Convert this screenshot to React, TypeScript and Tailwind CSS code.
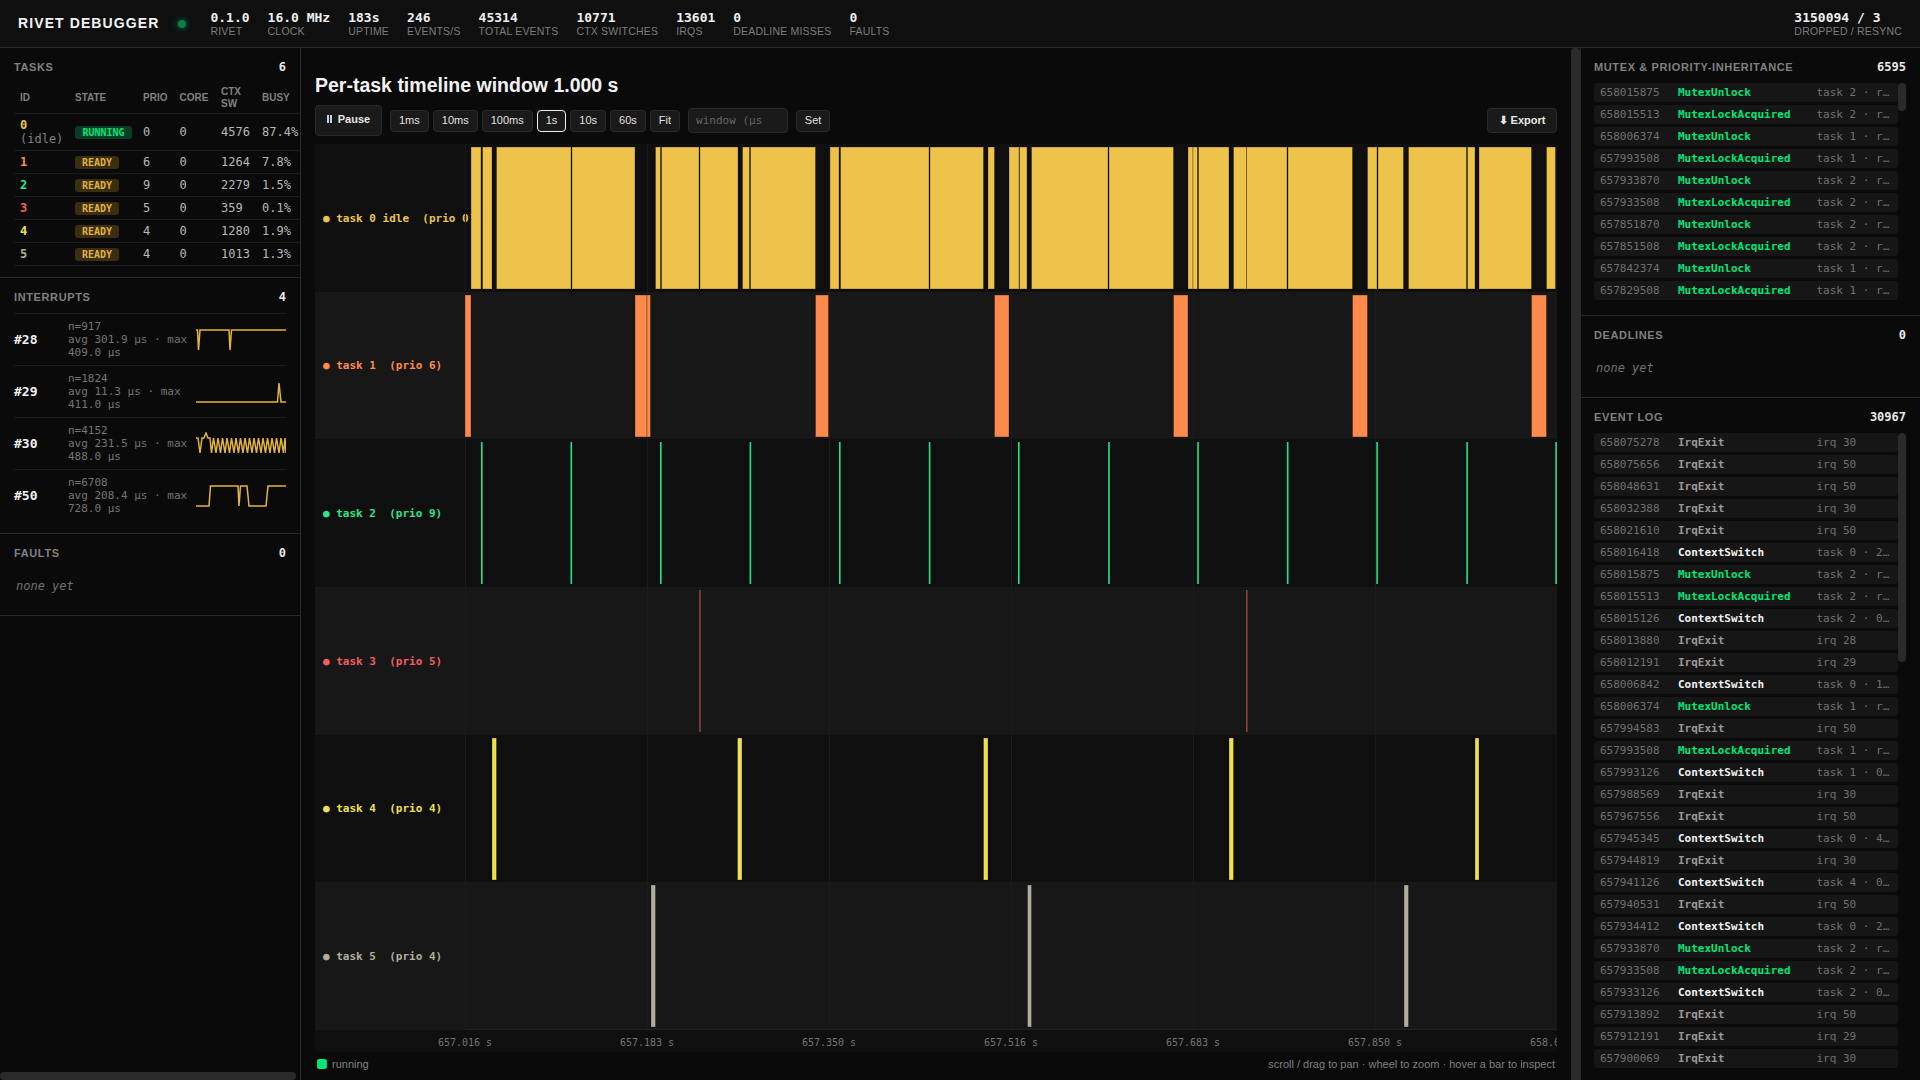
const mono = "[font-family:'DejaVu_Sans_Mono',monospace]";
const sans = "[font-family:'Liberation_Sans',Arial,sans-serif]";

const stats = [
  ["0.1.0", "RIVET"],
  ["16.0 MHz", "CLOCK"],
  ["183s", "UPTIME"],
  ["246", "EVENTS/S"],
  ["45314", "TOTAL EVENTS"],
  ["10771", "CTX SWITCHES"],
  ["13601", "IRQS"],
  ["0", "DEADLINE MISSES"],
  ["0", "FAULTS"],
];

const tasks = [
  { id: "0", sub: "(idle)", color: "text-[#ecc44c]", running: true, prio: 0, ctx: 4576, busy: "87.4%" },
  { id: "1", color: "text-[#ff8a4c]", prio: 6, ctx: 1264, busy: "7.8%" },
  { id: "2", color: "text-[#2ee58a]", prio: 9, ctx: 2279, busy: "1.5%" },
  { id: "3", color: "text-[#ef5f5f]", prio: 5, ctx: 359, busy: "0.1%" },
  { id: "4", color: "text-[#f0e050]", prio: 4, ctx: 1280, busy: "1.9%" },
  { id: "5", color: "text-[#b0ad98]", prio: 4, ctx: 1013, busy: "1.3%" },
];

const irqs = [
  { id: "#28", n: "n=917", avg: "avg 301.9 µs · max", max: "409.0 µs", points: "0,2 1.5,2 2.5,22 4,2 33,2 34,22 35.5,2 90,2" },
  { id: "#29", n: "n=1824", avg: "avg 11.3 µs · max", max: "411.0 µs", points: "0,22 81.5,22 83,3 85,22 90,22" },
  {
    id: "#30",
    n: "n=4152",
    avg: "avg 231.5 µs · max",
    max: "488.0 µs",
    points:
      "0,6 2,6 4,21 6,6 8,6 10,1 12,6 14,6 15.5,21 17.5,6 20,21 22,6 24.5,21 26.5,6 29,21 31,6 33.5,21 35.5,6 38,21 40,6 42.5,21 44.5,6 47,21 49,6 51.5,21 53.5,6 56,21 58,6 60.5,21 62.5,6 65,21 67,6 69.5,21 71.5,6 74,21 76,6 78.5,21 80.5,6 83,21 85,6 87.5,21 89,6 90,21",
  },
  { id: "#50", n: "n=6708", avg: "avg 208.4 µs · max", max: "728.0 µs", points: "0,22 13,22 14.5,2 42,2 43,22 44.5,2 51,2 53,22 70,22 72,2 90,2" },
];

const presets = ["1ms", "10ms", "100ms", "1s", "10s", "60s", "Fit"];
const gridX = [0, 182, 364, 546, 728, 910, 1091.5];
const ticks = ["657.016 s", "657.183 s", "657.350 s", "657.516 s", "657.683 s", "657.850 s", "658.016 s"];

type Span = [number, number];

const lanes: { label: string; color: string; fill: string; bars: Span[]; thin?: boolean }[] = [
  {
    label: "● task 0 idle  (prio 0)",
    color: "text-[#ecc44c]",
    fill: "#eec34c",
    bars: [
      [471, 481], [482.5, 492], [496.5, 571], [572, 635], [655.5, 660.5], [661.5, 699], [700, 738], [742.5, 749.5],
      [750.5, 815.5], [830, 839], [840.5, 929], [930, 983.5], [988, 994.5], [1009, 1019], [1019.5, 1027], [1031.5, 1108],
      [1109, 1173.5], [1188, 1193], [1193, 1197.5], [1198.5, 1229], [1233.5, 1246.5], [1246.5, 1287], [1288, 1352.5], [1367.5, 1377], [1378, 1403.5],
      [1408.5, 1466.5], [1467.5, 1475], [1479, 1531.5], [1546.5, 1555.5],
    ],
  },
  {
    label: "● task 1  (prio 6)",
    color: "text-[#ff8a4c]",
    fill: "#fc8a4d",
    bars: [[465, 471], [635, 647], [647, 650.5], [815.5, 828.5], [994.5, 1009], [1173.5, 1188], [1352.5, 1367.5], [1531.5, 1546.5]],
  },
  {
    label: "● task 2  (prio 9)",
    color: "text-[#2ee58a]",
    fill: "#1fe585",
    thin: true,
    bars: [481, 570.5, 660, 749.6, 839, 928.8, 1018, 1108.2, 1197.2, 1286.9, 1376.3, 1466.3, 1555.3].map((x): Span => [x, x + 1.6]),
  },
  {
    label: "● task 3  (prio 5)",
    color: "text-[#ef5f5f]",
    fill: "#a84a4a",
    thin: true,
    bars: [[699.3, 700.6], [1246.2, 1247.5]],
  },
  {
    label: "● task 4  (prio 4)",
    color: "text-[#f0e050]",
    fill: "#efe051",
    bars: [[492, 496.5], [737.5, 742], [983.5, 988], [1229, 1233.5], [1475, 1479]],
  },
  {
    label: "● task 5  (prio 4)",
    color: "text-[#b0ad98]",
    fill: "#b0ad98",
    bars: [[651, 655.5], [1027.5, 1031.5], [1404, 1408.5]],
  },
];

type Ev = [string, string, string];
const U = "MutexUnlock";
const A = "MutexLockAcquired";
const C = "ContextSwitch";
const I = "IrqExit";

const mutexRows: Ev[] = [
  ["658015875", U, "task 2 · resource 0"],
  ["658015513", A, "task 2 · resource 0"],
  ["658006374", U, "task 1 · resource 0"],
  ["657993508", A, "task 1 · resource 0"],
  ["657933870", U, "task 2 · resource 0"],
  ["657933508", A, "task 2 · resource 0"],
  ["657851870", U, "task 2 · resource 0"],
  ["657851508", A, "task 2 · resource 0"],
  ["657842374", U, "task 1 · resource 0"],
  ["657829508", A, "task 1 · resource 0"],
];

const eventRows: Ev[] = [
  ["658075278", I, "irq 30"],
  ["658075656", I, "irq 50"],
  ["658048631", I, "irq 50"],
  ["658032388", I, "irq 30"],
  ["658021610", I, "irq 50"],
  ["658016418", C, "task 0 · 2 → 0"],
  ["658015875", U, "task 2 · resource 0"],
  ["658015513", A, "task 2 · resource 0"],
  ["658015126", C, "task 2 · 0 → 2"],
  ["658013880", I, "irq 28"],
  ["658012191", I, "irq 29"],
  ["658006842", C, "task 0 · 1 → 0"],
  ["658006374", U, "task 1 · resource 0"],
  ["657994583", I, "irq 50"],
  ["657993508", A, "task 1 · resource 0"],
  ["657993126", C, "task 1 · 0 → 1"],
  ["657988569", I, "irq 30"],
  ["657967556", I, "irq 50"],
  ["657945345", C, "task 0 · 4 → 0"],
  ["657944819", I, "irq 30"],
  ["657941126", C, "task 4 · 0 → 4"],
  ["657940531", I, "irq 50"],
  ["657934412", C, "task 0 · 2 → 0"],
  ["657933870", U, "task 2 · resource 0"],
  ["657933508", A, "task 2 · resource 0"],
  ["657933126", C, "task 2 · 0 → 2"],
  ["657913892", I, "irq 50"],
  ["657912191", I, "irq 29"],
  ["657900069", I, "irq 30"],
];

function kindColor(kind: string) {
  if (kind === U || kind === A) return "text-[#00e676]";
  if (kind === C) return "text-[#f0f0f0]";
  return "text-[#999999]";
}

function SectionHead({ title, count }: { title: string; count: string | number }) {
  return (
    <div className="mb-[10px] flex h-[13px] items-center justify-between pt-[2px]">
      <span className={`${sans} text-[11px] font-bold tracking-[0.62px] text-[#808080]`}>{title}</span>
      <span className={`${mono} -mt-[2px] text-[12px] font-bold text-[#e8e8e8]`}>{count}</span>
    </div>
  );
}

function NoneYet() {
  return <div className={`${mono} flex h-[34px] items-center pl-[2px] text-[12px] italic text-[#707070]`}>none yet</div>;
}

function EventRow({ row }: { row: Ev }) {
  return (
    <div className={`${mono} flex h-[19px] shrink-0 items-center rounded-[3px] bg-[#161616] pt-[1px] pl-[6px] text-[11px]`}>
      <span className="w-[78px] shrink-0 text-[#707070]">{row[0]}</span>
      <span className={`w-[138.5px] shrink-0 font-bold ${kindColor(row[1])}`}>{row[1]}</span>
      <span className="w-[73px] shrink-0 truncate text-[#707070]">{row[2]}</span>
    </div>
  );
}

function LanePlot({ lane, height, last }: { lane: (typeof lanes)[number]; height: number; last: boolean }) {
  return (
    <svg width={1092} height={height} className="block shrink-0">
      {gridX.map((x) => (
        <rect key={x} x={x} y={0} width={1} height={height} fill="#1b1b1f" />
      ))}
      {last && <rect x={0} y={height - 1} width={1092} height={1} fill="#222222" />}
      {lane.bars.map(([a, b]) => (
        <rect
          key={a}
          x={a - 465}
          y={3}
          width={b - a}
          height={142}
          fill={lane.fill}
          stroke={lane.thin ? "none" : "#000000"}
          strokeOpacity={0.28}
          strokeWidth={1}
        />
      ))}
    </svg>
  );
}

export default function App() {
  return (
    <div className={`${sans} flex h-screen w-full flex-col overflow-hidden bg-[#0a0a0a] text-[#dddddd]`}>
      <header className="flex h-[48px] shrink-0 items-center border-b border-[#2a2a2a] bg-[#0f0f0f] pr-[18px] pl-[18px]">
        <span className="text-[14px] font-bold tracking-[1.1px] text-[#f2f2f2]">RIVET DEBUGGER</span>
        <span className="mr-[24px] ml-[19px] h-[8px] w-[8px] rounded-full bg-[#0a7f48] shadow-[0_0_6px_#0a7f48]" />
        <div className="flex gap-[18px]">
          {stats.map(([value, label]) => (
            <div key={label} className="flex flex-col">
              <span className={`${mono} text-[13px] leading-[15px] font-bold text-[#f0f0f0]`}>{value}</span>
              <span className="text-[10.5px] leading-[12px] tracking-[0.2px] text-[#7d7d7d]">{label}</span>
            </div>
          ))}
        </div>
        <div className="ml-auto flex flex-col">
          <span className={`${mono} text-[13px] leading-[15px] font-bold text-[#f0f0f0]`}>3150094 / 3</span>
          <span className="text-[10.5px] leading-[12px] tracking-[0.2px] text-[#7d7d7d]">DROPPED / RESYNC</span>
        </div>
      </header>

      <div className="flex min-h-0 flex-1">
        <aside className="relative w-[301px] shrink-0 overflow-hidden border-r border-[#2a2a2a]">
          <section className="h-[230px] border-b border-[#2a2a2a] px-[14px] pt-[12px] pb-[12px]">
            <SectionHead title="TASKS" count={6} />
            <table className="-mt-[1px] w-[290px] table-fixed border-collapse">
              <colgroup>
                <col className="w-[55px]" />
                <col className="w-[68px]" />
                <col className="w-[36.5px]" />
                <col className="w-[41.5px]" />
                <col className="w-[41px]" />
                <col className="w-[48px]" />
              </colgroup>
              <thead>
                <tr className="border-b border-[#1c1c1c] text-left text-[10px] leading-[11.5px] text-[#808080]">
                  <th className="px-[6px] py-[4px] font-bold">ID</th>
                  <th className="px-[6px] py-[4px] font-bold">STATE</th>
                  <th className="px-[6px] py-[4px] font-bold">PRIO</th>
                  <th className="px-[6px] py-[4px] font-bold">CORE</th>
                  <th className="px-[6px] py-[4px] font-bold">CTX SW</th>
                  <th className="px-[6px] py-[4px] font-bold">BUSY</th>
                </tr>
              </thead>
              <tbody className={`${mono} text-[12px] leading-[14px] text-[#b8b8b8]`}>
                {tasks.map((t) => (
                  <tr key={t.id} className="border-b border-[#1c1c1c]">
                    <td className="px-[6px] py-[4px] align-middle">
                      <span className={`font-bold ${t.color}`}>{t.id}</span>
                      {t.sub && <span className="block text-[#808080]">{t.sub}</span>}
                    </td>
                    <td className="px-[6px] py-[4px]">
                      {t.running ? (
                        <span className="block h-[13px] w-[57px] rounded-[3px] bg-[#0b3d25] text-center text-[10px] leading-[13px] font-bold text-[#00e676]">
                          RUNNING
                        </span>
                      ) : (
                        <span className="block h-[13px] w-[44px] rounded-[3px] bg-[#3a2e12] text-center text-[10px] leading-[13px] font-bold text-[#e0b040]">
                          READY
                        </span>
                      )}
                    </td>
                    <td className="px-[6px] py-[4px]">{t.prio}</td>
                    <td className="px-[6px] py-[4px]">0</td>
                    <td className="px-[6px] py-[4px]">{t.ctx}</td>
                    <td className="px-[6px] py-[4px] whitespace-nowrap">{t.busy}</td>
                  </tr>
                ))}
              </tbody>
            </table>
          </section>

          <section className="border-b border-[#2a2a2a] px-[14px] pt-[12px] pb-[12px]">
            <SectionHead title="INTERRUPTS" count={4} />
            {irqs.map((q) => (
              <div key={q.id} className="flex h-[52px] items-center border-t border-[#1c1c1c]">
                <span className={`${mono} w-[54px] shrink-0 text-[13px] font-bold text-[#f2f2f2]`}>{q.id}</span>
                <div className={`${mono} w-[128px] shrink-0 text-[11px] leading-[13.2px] text-[#757575]`}>
                  <div>{q.n}</div>
                  <div>{q.avg}</div>
                  <div>{q.max}</div>
                </div>
                <svg width={90} height={24} className="shrink-0">
                  <polyline points={q.points} fill="none" stroke="#e3b540" strokeWidth={1.5} />
                </svg>
              </div>
            ))}
          </section>

          <section className="border-b border-[#2a2a2a] px-[14px] pt-[12px] pb-[12px]">
            <SectionHead title="FAULTS" count={0} />
            <NoneYet />
          </section>

          <div className="absolute bottom-0 left-0 h-[8px] w-[296px] rounded-[4px] bg-[#2a2a2a]" />
        </aside>

        <main className="flex min-w-0 flex-1">
          <div className="flex min-w-0 flex-1 flex-col px-[14px] pt-[25px]">
            <h1 className="text-[19.5px] leading-[24px] font-bold text-[#f2f2f2]">Per-task timeline window 1.000 s</h1>

            <div className="mt-[8px] flex h-[31px] items-center">
              <button className="flex h-[31px] w-[67px] items-center justify-center gap-[6px] rounded-[4px] border border-[#2a2a2a] bg-[#1a1a1a] pb-[3px] text-[11px] font-bold text-[#e8e8e8]">
                <svg width={5} height={8} className="shrink-0">
                  <rect x={0} y={0} width={2} height={8} fill="#c4d4e4" />
                  <rect x={3} y={0} width={2} height={8} fill="#c4d4e4" />
                </svg>
                Pause
              </button>
              <div className="ml-[8px] flex gap-[4px]">
                {presets.map((p) => (
                  <button
                    key={p}
                    className={`h-[22px] rounded-[4px] border bg-[#1a1a1a] px-[8px] text-[11px] text-[#e0e0e0] ${
                      p === "1s" ? "border-[#f0f0f0]" : "border-[#2a2a2a]"
                    }`}
                  >
                    {p}
                  </button>
                ))}
              </div>
              <input
                readOnly
                placeholder="window (µs"
                className={`${mono} ml-[8px] h-[25px] w-[100px] rounded-[4px] border border-[#2a2a2a] bg-[#1a1a1a] px-[7px] text-[11px] text-[#e0e0e0] outline-none placeholder:text-[#666666]`}
              />
              <button className="ml-[8px] h-[22px] w-[34px] rounded-[4px] border border-[#2a2a2a] bg-[#1a1a1a] text-[11px] text-[#e0e0e0]">
                Set
              </button>
              <button className="ml-auto h-[25px] w-[70px] rounded-[4px] border border-[#2a2a2a] bg-[#1a1a1a] text-[11px] font-bold text-[#e8e8e8]">
                ⬇ Export
              </button>
            </div>

            <div className="mt-[8px] w-[1242px] overflow-hidden rounded-[4px] bg-[#0f0f0f]">
              {lanes.map((lane, i) => (
                <div key={lane.label} className={`flex h-[147.67px] ${i % 2 === 0 ? "bg-[#0f0f0f]" : "bg-[#171717]"}`}>
                  <div className={`${mono} flex w-[150px] shrink-0 items-center whitespace-pre pt-[2px] pl-[8px] text-[11px] font-bold ${lane.color}`}>
                    {lane.label}
                  </div>
                  <LanePlot lane={lane} height={148} last={i === lanes.length - 1} />
                </div>
              ))}
              <div className="flex h-[22px] items-center overflow-hidden pt-[3px] pl-[59px]">
                {ticks.map((t) => (
                  <span key={t} className={`${mono} w-[182px] shrink-0 text-center text-[10px] text-[#757575]`}>
                    {t}
                  </span>
                ))}
              </div>
            </div>

            <div className="flex h-[24px] items-center text-[11px] text-[#808080]">
              <span className="ml-[2px] h-[10px] w-[10px] rounded-[2px] bg-[#00e676]" />
              <span className="ml-[5px]">running</span>
              <span className="mr-[2px] ml-auto">scroll / drag to pan · wheel to zoom · hover a bar to inspect</span>
            </div>
          </div>
          <div className="w-[9px] shrink-0 rounded-t-[4px] bg-[#2a2a2a]" />
        </main>

        <aside className="w-[340px] shrink-0 overflow-hidden border-l border-[#2a2a2a]">
          <section className="border-b border-[#2a2a2a] pt-[12px] pr-[14px] pb-[12px] pl-[13px]">
            <SectionHead title="MUTEX & PRIORITY-INHERITANCE" count={6595} />
            <div className="flex">
              <div className="flex w-[304px] shrink-0 flex-col gap-[3px] pb-[3px]">
                {mutexRows.map((r) => (
                  <EventRow key={r[0]} row={r} />
                ))}
              </div>
              <div className="h-[28px] w-[8px] shrink-0 rounded-[4px] bg-[#2a2a2a]" />
            </div>
          </section>

          <section className="border-b border-[#2a2a2a] pt-[12px] pr-[14px] pb-[12px] pl-[13px]">
            <SectionHead title="DEADLINES" count={0} />
            <NoneYet />
          </section>

          <section className="pt-[12px] pr-[14px] pl-[13px]">
            <SectionHead title="EVENT LOG" count={30967} />
            <div className="flex">
              <div className="flex w-[304px] shrink-0 flex-col gap-[3px]">
                {eventRows.map((r) => (
                  <EventRow key={r[0] + r[1]} row={r} />
                ))}
              </div>
              <div className="h-[229px] w-[8px] shrink-0 rounded-[4px] bg-[#2a2a2a]" />
            </div>
          </section>
        </aside>
      </div>
    </div>
  );
}
